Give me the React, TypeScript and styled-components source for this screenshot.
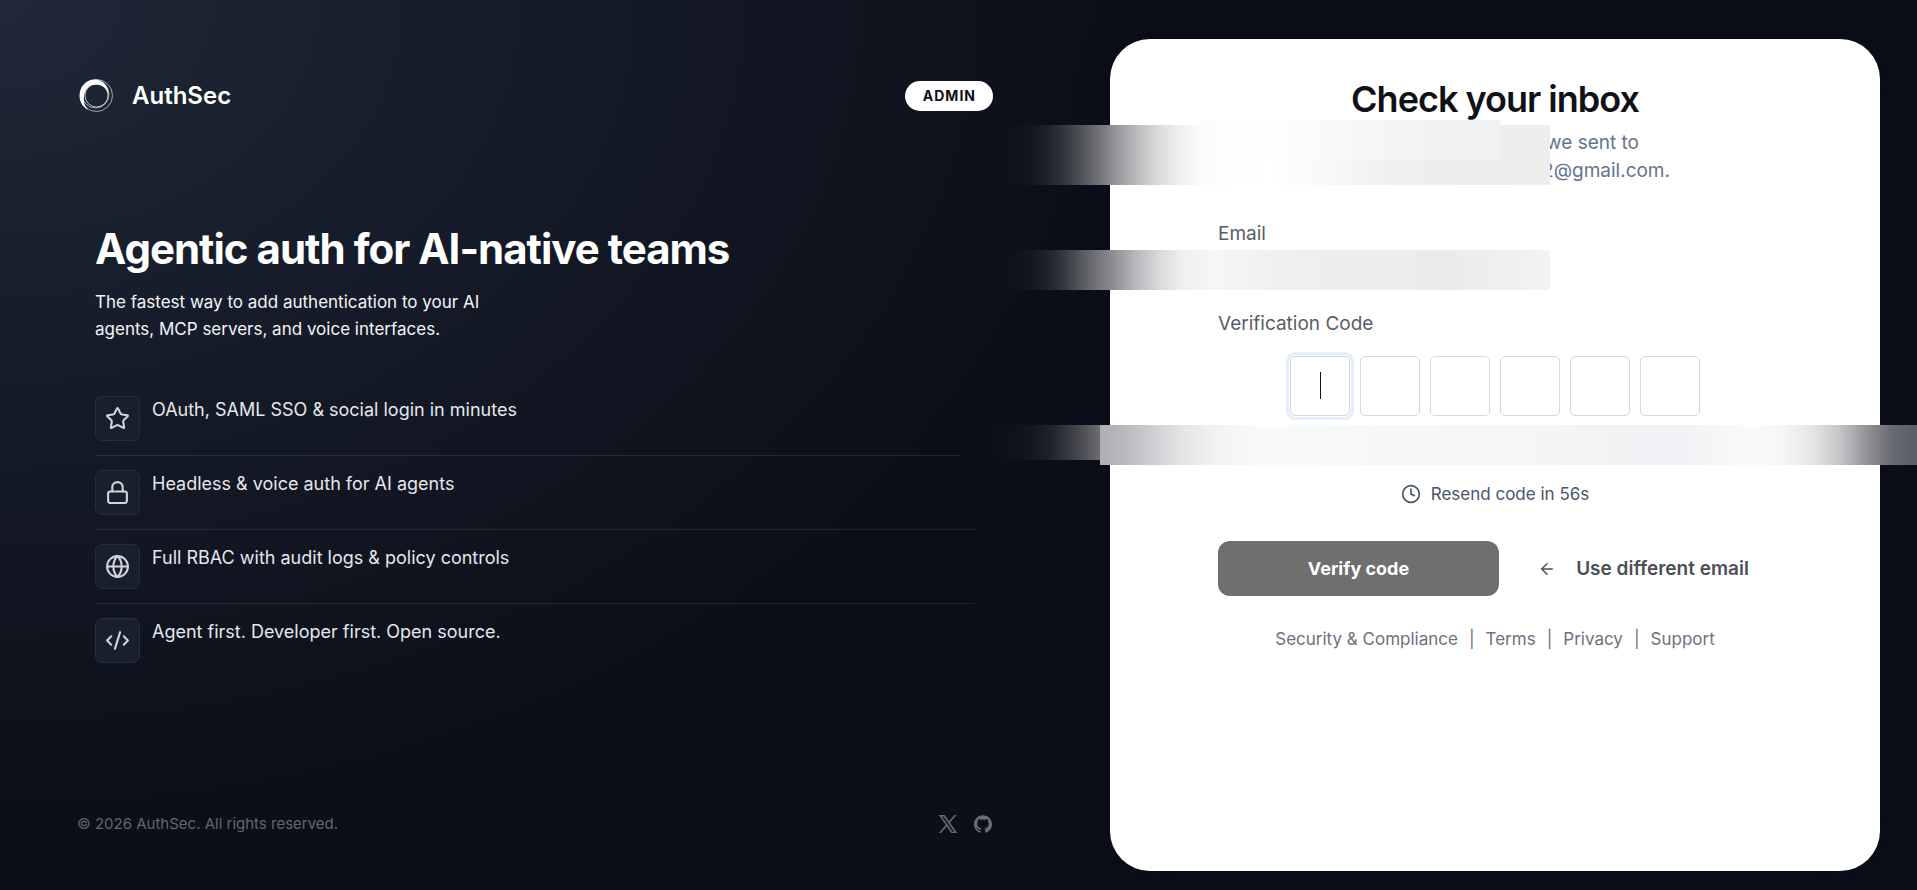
import React from "react";
import styled, { createGlobalStyle } from "styled-components";
import { ArrowLeft, Clock, CodeXml, Globe, Lock, Star } from "lucide-react";

const GlobalStyle = createGlobalStyle`
  *, *::before, *::after { box-sizing: border-box; }
  body {
    margin: 0;
    background: #0b0f19;
    font-family: Inter, "Liberation Sans", sans-serif;
    color: #fff;
  }
  h1, h2, p, ul { margin: 0; padding: 0; }
  button, input { font: inherit; }
`;

const Page = styled.div`
  position: relative;
  display: grid;
  grid-template-columns: minmax(0, 1072fr) minmax(0, 845fr);
  min-height: 100vh;
  overflow: hidden;
  background: radial-gradient(ellipse 58% 92% at 0% 0%, #1f2937 0%, #151b28 48%, #0b0f19 100%) #0b0f19;
`;

const Hero = styled.main`
  display: flex;
  flex-direction: column;
  padding: 77px 79px 52px 77px;
`;

const Header = styled.header`
  display: flex;
  align-items: center;
  justify-content: space-between;
  height: 37px;
`;

const Brand = styled.div`
  display: flex;
  align-items: center;
  gap: 17px;
  font-size: 24px;
  font-weight: 600;
  line-height: 32px;
`;

const Badge = styled.span`
  padding: 0 17px 0 18px;
  border-radius: 15px;
  background: #fff;
  color: #0b0f19;
  font-size: 14px;
  font-weight: 700;
  line-height: 30px;
  letter-spacing: 1px;
`;

const Pitch = styled.section`
  padding: 108px 18px 0;
`;

const Headline = styled.h1`
  font-size: 42px;
  font-weight: 700;
  line-height: 54px;
  letter-spacing: -1px;
`;

const Lead = styled.p`
  max-width: 440px;
  padding-top: 13px;
  color: #f4f5f6;
  font-size: 17px;
  line-height: 27px;
`;

const Features = styled.ul`
  padding-top: 39px !important;
  list-style: none;
`;

const Feature = styled.li`
  display: flex;
  gap: 12px;
  height: 74px;
  padding-top: 14px;
  border-bottom: 1px solid rgba(255, 255, 255, 0.09);
  font-size: 18px;
  line-height: 28px;
  color: #e5e7eb;
  &:first-child { margin-right: 14px; }
  &:last-child { border-bottom: 0; }
`;

const FeatureIcon = styled.span`
  display: grid;
  place-items: center;
  flex: none;
  width: 45px;
  height: 45px;
  border: 1px solid #252e3b;
  border-radius: 7px;
  background: #18202c;
  color: #d1d5db;
`;

const HeroFooter = styled.footer`
  display: flex;
  align-items: center;
  justify-content: space-between;
  margin-top: auto;
  color: #63666c;
  font-size: 15px;
  line-height: 28px;
`;

const Socials = styled.nav`
  display: flex;
  gap: 17px;
  padding-right: 1px;
  a { display: flex; color: #6b6d72; }
`;

const Aside = styled.aside`
  display: flex;
  padding: 39px 37px 19px 38px;
`;

const Card = styled.section`
  flex: 1;
  padding: 37px 108px;
  border-radius: 40px;
  background: #fff;
  box-shadow: 0 0 30px rgba(8, 8, 20, 0.4);
  color: #4b5563;
`;

const CardTitle = styled.h2`
  color: #0f1115;
  font-size: 36px;
  font-weight: 600;
  line-height: 46px;
  letter-spacing: -1px;
  text-align: center;
`;

const Sent = styled.p`
  width: 350px;
  margin: 0 auto;
  padding-top: 7px;
  color: #64748b;
  font-size: 19px;
  line-height: 28px;
  text-align: right;
  span { display: block; }
  span:first-child { padding-right: 31px; }
`;

const Field = styled.div`
  display: flex;
  flex-direction: column;
  padding-top: 35px;
`;

const Label = styled.label`
  color: #5a5d64;
  font-size: 19px;
  line-height: 28px;
`;

const EmailInput = styled.input`
  height: 34px;
  margin-top: 5px;
  border: 0;
  background: transparent;
  outline: 0;
`;

const CodeField = styled.fieldset`
  min-width: 0;
  margin: 0;
  padding: 23px 0 0;
  border: 0;
`;

const CodeLabel = styled.legend`
  float: left;
  width: 100%;
  padding: 0;
  color: #5a5d64;
  font-size: 19px;
  line-height: 28px;
`;

const CodeRow = styled.div`
  clear: both;
  display: flex;
  justify-content: center;
  gap: 10px;
  padding-top: 18px;
`;

const Digit = styled.input<{ $active?: boolean }>`
  width: 60px;
  height: 60px;
  padding: 0;
  border: 1px solid #d5d8dd;
  border-radius: 5px;
  outline: ${(p) => (p.$active ? "3px solid #e3edfc" : "0")};
  outline-offset: 1px;
  background: #fff;
  text-align: center;
`;

const DigitBox = styled.div`
  position: relative;
  display: flex;
`;

const Caret = styled.i`
  position: absolute;
  left: 30px;
  top: 16px;
  width: 1px;
  height: 27px;
  background: #111;
`;

const Resend = styled.p`
  display: flex;
  align-items: center;
  justify-content: center;
  gap: 10px;
  padding-top: 64px !important;
  color: #475569;
  font-size: 17px;
  line-height: 28px;
`;

const Actions = styled.div`
  display: grid;
  grid-template-columns: 281px 1fr;
  padding-top: 33px;
`;

const Action = styled.button<{ $primary?: boolean }>`
  display: flex;
  align-items: center;
  justify-content: center;
  gap: 20px;
  height: 55px;
  padding: 0 0 0 ${(p) => (p.$primary ? "0" : "16px")};
  border: 0;
  border-radius: 12px;
  background: ${(p) => (p.$primary ? "#6f6f6f" : "transparent")};
  color: ${(p) => (p.$primary ? "#fff" : "#4b4f58")};
  font-size: ${(p) => (p.$primary ? "18px" : "19px")};
  font-weight: ${(p) => (p.$primary ? 700 : 600)};
  white-space: nowrap;
`;

const Legal = styled.nav`
  display: flex;
  justify-content: center;
  gap: 11px;
  padding-top: 29px;
  color: #6b7280;
  font-size: 17px;
  line-height: 28px;
  white-space: nowrap;
  a { color: inherit; text-decoration: none; }
`;

const Smear = styled.div<{ $top: number; $left: number; $width: number; $height: number; $fill: string }>`
  position: absolute;
  top: ${(p) => p.$top}px;
  left: ${(p) => p.$left}px;
  width: ${(p) => p.$width}px;
  height: ${(p) => p.$height}px;
  background: linear-gradient(90deg, ${(p) => p.$fill});
  pointer-events: none;
`;

const smears = [
  { $top: 125, $left: 990, $width: 560, $height: 60, $fill: "rgba(11,15,25,0) 0, #0e121c 24px, #14171f 42px, #1e202a 56px, #33353d 74px, #515359 92px, #77777b 112px, #929296 124px, #bdbdc0 148px, #dadadc 168px, #efeff0 190px, #fcfcfc 212px, #fff 280px, #f8f8f9 340px, #eeeff0 410px, #ebecee 490px, #eeeeef 560px" },
  { $top: 120, $left: 1200, $width: 300, $height: 40, $fill: "#fcfcfc 0, #fefefe 70px, #f8f9f9 130px, #f3f4f5 200px, #f0f1f3 260px, #f1f2f4 300px" },
  { $top: 250, $left: 990, $width: 560, $height: 40, $fill: "rgba(11,15,25,0) 0, #0e121c 24px, #14171f 42px, #1e202a 56px, #33353d 72px, #585a60 92px, #88898d 120px, #b5b6ba 145px, #dadadb 170px, #f0f0f1 194px, #f6f6f6 225px, #efefef 300px, #ecedee 378px, #ebebeb 460px, #f3f3f3 560px" },
  { $top: 425, $left: 990, $width: 110, $height: 35, $fill: "rgba(11,15,25,0) 0, #0e121c 24px, #14171f 42px, #20212b 60px, #404248 85px, #6d6d70 110px" },
  { $top: 425, $left: 1100, $width: 817, $height: 40, $fill: "#afafb2 0, #b6b7ba 20px, #c9cacd 47px, #e4e5e6 83px, #f2f3f3 119px, #f9faf9 161px, #f6f7f8 298px, #f5f6f8 420px, #f1f3f5 508px, #f1f2f5 580px, #fafafa 650px, #f7f7f7 680px, #e6e6e6 712px, #c4c5c7 740px, #8c8d91 770px, #666970 793px, #5b5e66 817px" },
];

const features = [
  { icon: Star, text: "OAuth, SAML SSO & social login in minutes" },
  { icon: Lock, text: "Headless & voice auth for AI agents" },
  { icon: Globe, text: "Full RBAC with audit logs & policy controls" },
  { icon: CodeXml, text: "Agent first. Developer first. Open source." },
];

const Logo = () => (
  <svg width="38" height="38" viewBox="0 0 38 38" fill="none" stroke="#fff" aria-hidden="true">
    <path fill="#fff" stroke="none" d="M18 2.500C9 2.500 2.500 9.500 2.500 18.500C2.500 25 6 30.500 11.500 33C7.500 29 6.500 25 7 20C7.500 12 12.500 7.500 19 7.500C25.500 7.500 30 11 31.500 18C32 9 26 2.500 18 2.500Z" />
    <circle cx="19.500" cy="18.500" r="16" strokeWidth=".8" opacity=".75" />
    <circle cx="19.500" cy="18.500" r="11.500" strokeWidth="1" opacity=".7" />
    <circle cx="18.500" cy="17.500" r="13.500" strokeWidth=".8" opacity=".75" />
  </svg>
);

const XLogo = () => (
  <svg width="18" height="18" viewBox="0 0 24 24" fill="currentColor" stroke="currentColor" strokeWidth=".7" aria-hidden="true">
    <path d="M14.234 10.162 22.977 0h-2.072l-7.591 8.824L7.251 0H.258l9.168 13.343L.258 24H2.330l8.016-9.318L16.749 24h6.993zm-2.837 3.299-.929-1.329L3.076 1.560h3.182l5.965 8.532.929 1.329 7.754 11.090h-3.182z" />
  </svg>
);

const GitHubLogo = () => (
  <svg width="18" height="18" viewBox="0 0 24 24" fill="currentColor" aria-hidden="true">
    <path d="M12 .297c-6.630 0-12 5.373-12 12 0 5.303 3.438 9.800 8.205 11.385.6.113.82-.258.82-.577 0-.285-.01-1.040-.015-2.040-3.338.724-4.042-1.610-4.042-1.610C4.422 18.070 3.633 17.700 3.633 17.700c-1.087-.744.084-.729.084-.729 1.205.084 1.838 1.236 1.838 1.236 1.070 1.835 2.809 1.305 3.495.998.108-.776.417-1.305.76-1.605-2.665-.3-5.466-1.332-5.466-5.930 0-1.310.465-2.380 1.235-3.220-.135-.303-.54-1.523.105-3.176 0 0 1.005-.322 3.300 1.230.96-.267 1.980-.399 3-.405 1.020.006 2.040.138 3 .405 2.280-1.552 3.285-1.230 3.285-1.230.645 1.653.24 2.873.12 3.176.765.84 1.230 1.910 1.230 3.220 0 4.610-2.805 5.625-5.475 5.920.42.36.81 1.096.81 2.220 0 1.606-.015 2.896-.015 3.286 0 .315.21.690.825.570C20.565 22.092 24 17.592 24 12.297c0-6.627-5.373-12-12-12" />
  </svg>
);

export default function App() {
  return (
    <>
      <GlobalStyle />
      <Page>
        <Hero>
          <Header>
            <Brand><Logo />AuthSec</Brand>
            <Badge>ADMIN</Badge>
          </Header>
          <Pitch>
            <Headline>Agentic auth for AI-native teams</Headline>
            <Lead>The fastest way to add authentication to your AI agents, MCP servers, and voice interfaces.</Lead>
            <Features>
              {features.map(({ icon: Icon, text }) => (
                <Feature key={text}>
                  <FeatureIcon><Icon size={25} strokeWidth={2} /></FeatureIcon>
                  {text}
                </Feature>
              ))}
            </Features>
          </Pitch>
          <HeroFooter>
            <span>© 2026 AuthSec. All rights reserved.</span>
            <Socials>
              <a href="#x" aria-label="X"><XLogo /></a>
              <a href="#github" aria-label="GitHub"><GitHubLogo /></a>
            </Socials>
          </HeroFooter>
        </Hero>
        <Aside>
          <Card>
            <CardTitle>Check your inbox</CardTitle>
            <Sent><span>we sent to</span><span>2@gmail.com.</span></Sent>
            <Field>
              <Label htmlFor="email">Email</Label>
              <EmailInput id="email" type="email" />
            </Field>
            <CodeField>
              <CodeLabel>Verification Code</CodeLabel>
              <CodeRow>
                {[1, 2, 3, 4, 5, 6].map((n) => (
                  <DigitBox key={n}>
                    <Digit $active={n === 1} aria-label={`Digit ${n}`} inputMode="numeric" maxLength={1} />
                    {n === 1 && <Caret />}
                  </DigitBox>
                ))}
              </CodeRow>
            </CodeField>
            <Resend><Clock size={20} />Resend code in 56s</Resend>
            <Actions>
              <Action $primary type="submit">Verify code</Action>
              <Action type="button"><ArrowLeft size={18} />Use different email</Action>
            </Actions>
            <Legal>
              <a href="#security">Security &amp; Compliance</a><span>|</span>
              <a href="#terms">Terms</a><span>|</span>
              <a href="#privacy">Privacy</a><span>|</span>
              <a href="#support">Support</a>
            </Legal>
          </Card>
        </Aside>
        {smears.map((s, i) => <Smear key={i} {...s} />)}
      </Page>
    </>
  );
}
